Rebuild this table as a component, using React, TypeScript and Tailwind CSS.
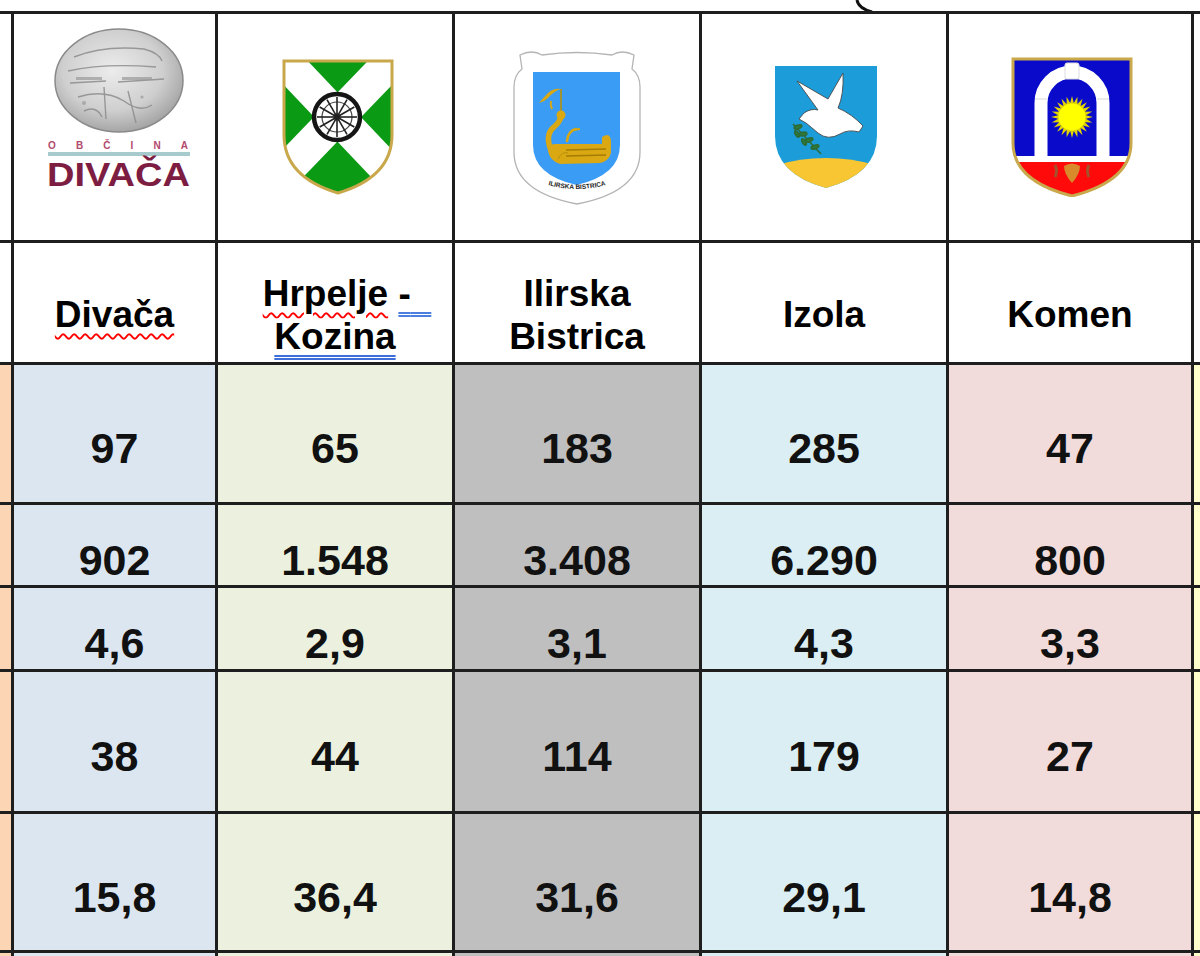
import React from "react";

const DivacaLogo = () => (
  <svg width="150" height="170" viewBox="0 0 150 170" className="mb-[30px] ml-[8px]">
    <defs>
      <radialGradient id="dg" cx="0.45" cy="0.4" r="0.65">
        <stop offset="0" stopColor="#ececec" />
        <stop offset="0.6" stopColor="#cfcfcf" />
        <stop offset="1" stopColor="#9c9c9c" />
      </radialGradient>
    </defs>
    <ellipse cx="75" cy="53.5" rx="64" ry="51.5" fill="url(#dg)" stroke="#8a8a8a" strokeWidth="1.5" />
    <g stroke="#8d8d8d" fill="none" strokeWidth="1.4" opacity="0.85">
      <path d="M30 30 Q60 18 100 22 Q115 26 118 34" />
      <path d="M24 44 Q60 36 112 40" />
      <path d="M26 56 L62 54 M74 55 L120 52" />
      <path d="M34 70 Q60 62 80 74 Q96 86 108 78" />
      <path d="M60 60 L62 92 M84 64 L92 96" />
      <path d="M40 84 Q52 78 58 90" />
    </g>
    <g fill="#9a9a9a" opacity="0.7">
      <rect x="32" y="50" width="26" height="3" />
      <rect x="78" y="50" width="30" height="3" />
      <circle cx="40" cy="76" r="2" />
      <circle cx="98" cy="70" r="1.6" />
    </g>
    <text x="4" y="122" fontSize="10" fill="#b24a6d" textLength="140" lengthAdjust="spacing" fontFamily="Liberation Sans, Arial, sans-serif" fontWeight="700">
      OBČINA
    </text>
    <rect x="4" y="125" width="142" height="4" fill="#a7cacd" />
    <text x="3" y="159" fontSize="33" fontWeight="700" fill="#7d1d42" textLength="143" lengthAdjust="spacingAndGlyphs" fontFamily="Liberation Sans, Arial, sans-serif">
      DIVAČA
    </text>
  </svg>
);

const HrpeljeShield = () => {
  const spokes = Array.from({ length: 12 }, (_, i) => {
    const a = (i * Math.PI * 2) / 12;
    return (
      <line key={i} x1={55 + 3 * Math.cos(a)} y1={58 + 3 * Math.sin(a)} x2={55 + 20 * Math.cos(a)} y2={58 + 20 * Math.sin(a)} stroke="#222" strokeWidth="1.6" />
    );
  });
  return (
    <svg width="112" height="136" viewBox="0 0 112 136" className="ml-[6px]">
      <defs>
        <clipPath id="hc">
          <path d="M2 2 H110 V76 Q110 118 56 134 Q2 118 2 76 Z" />
        </clipPath>
      </defs>
      <g clipPath="url(#hc)">
        <rect x="0" y="0" width="112" height="136" fill="#0a9a14" />
        <line x1="-10" y1="-11" x2="122" y2="128" stroke="#ffffff" strokeWidth="34" />
        <line x1="122" y1="-11" x2="-12" y2="128" stroke="#ffffff" strokeWidth="34" />
      </g>
      <path d="M2 2 H110 V76 Q110 118 56 134 Q2 118 2 76 Z" fill="none" stroke="#c9a84b" strokeWidth="3" />
      <circle cx="55" cy="58" r="23" fill="#fff" stroke="#151515" strokeWidth="4.5" />
      <circle cx="55" cy="58" r="15" fill="none" stroke="#444" strokeWidth="1.2" />
      {spokes}
      <circle cx="55" cy="58" r="3.4" fill="#222" />
    </svg>
  );
};

const IlirskaShield = () => (
  <svg width="134" height="160" viewBox="0 0 134 160">
    <path
      d="M10 8 Q22 2 32 8 Q67 3 102 8 Q112 2 124 8 L122 22 Q130 28 130 40 L130 105 Q130 145 67 157 Q4 145 4 105 L4 40 Q4 28 12 22 Z"
      fill="#fff"
      stroke="#b4b4b4"
      strokeWidth="1.3"
    />
    <path d="M23 25 H110 V98 Q110 128 66.5 138 Q23 128 23 98 Z" fill="#3a9cf5" />
    <path d="M51 42 L51 68" stroke="#b8900a" strokeWidth="1.6" />
    <path d="M51 42 Q44 44 38 51 Q34 55 29 56 Q34 50 38 46 Q44 41 51 42 Z" fill="#d9a812" />
    <path d="M41 54 Q40 58 42 62" stroke="#d9a812" strokeWidth="2" fill="none" />
    <path d="M42 106 Q34 88 44 80 Q51 74 51 68" stroke="#d9a812" strokeWidth="5.5" fill="none" strokeLinecap="round" />
    <circle cx="51" cy="68" r="4.5" fill="#d9a812" />
    <path d="M57 94 Q58 84 66 82" stroke="#d9a812" strokeWidth="2.6" fill="none" strokeLinecap="round" />
    <path d="M62 83 L70 82" stroke="#d9a812" strokeWidth="2" />
    <path d="M92 90 Q101 84 101 96 L101 106 Q99 114 90 116 L50 117 Q40 114 38 104 Q38 97 45 97 L92 97 Z" fill="#d9a812" />
    <path d="M56 103 L96 102 M56 109 L96 108" stroke="#a57d05" strokeWidth="1.4" />
    <path d="M48 112 Q52 104 58 106" stroke="#b8900a" strokeWidth="1" fill="none" />
    <defs>
      <path id="ibarc" d="M26 134 Q67 150 108 134" />
    </defs>
    <text fontSize="6.5" fontWeight="700" fill="#222" fontFamily="Liberation Sans, Arial, sans-serif">
      <textPath href="#ibarc" startOffset="50%" textAnchor="middle">
        ILIRSKA BISTRICA
      </textPath>
    </text>
  </svg>
);

const IzolaShield = () => (
  <svg width="106" height="126" viewBox="0 0 106 126" className="ml-[4px]">
    <defs>
      <clipPath id="ic">
        <path d="M2 2 H104 V72 Q104 110 53 124 Q2 110 2 72 Z" />
      </clipPath>
    </defs>
    <g clipPath="url(#ic)">
      <rect x="0" y="0" width="106" height="126" fill="#1c9dd9" />
      <path d="M0 102 Q53 86 106 102 V126 H0 Z" fill="#f8c632" />
    </g>
    <g stroke="#2c6a36" strokeWidth="1.6" fill="#2f7a3a">
      <path d="M20 60 L48 90" fill="none" />
      <ellipse cx="25" cy="63" rx="4" ry="1.8" transform="rotate(-20 25 63)" />
      <ellipse cx="30" cy="70" rx="4" ry="1.8" transform="rotate(-10 30 70)" />
      <ellipse cx="24" cy="70" rx="3.5" ry="1.6" transform="rotate(60 24 70)" />
      <ellipse cx="36" cy="76" rx="4" ry="1.8" transform="rotate(-20 36 76)" />
      <ellipse cx="31" cy="78" rx="3.5" ry="1.6" transform="rotate(60 31 78)" />
      <ellipse cx="42" cy="83" rx="4" ry="1.8" transform="rotate(-20 42 83)" />
    </g>
    <path
      d="M26 55 L31 49 Q38 44 45 46 L24 17 L55 35 L70 9 Q71 31 65 44 Q79 50 90 62 L86 68 Q75 65 67 70 Q55 77 45 69 Q38 63 33 59 Z"
      fill="#ffffff"
      stroke="#4a4a4a"
      strokeWidth="0.9"
      strokeLinejoin="round"
    />
  </svg>
);

const KomenShield = () => {
  const pts: string[] = [];
  for (let i = 0; i < 48; i++) {
    const a = (i * Math.PI * 2) / 48;
    const r = i % 2 === 0 ? 21 : 14;
    pts.push(`${61 + r * Math.cos(a)},${60 + r * Math.sin(a)}`);
  }
  return (
    <svg width="122" height="140" viewBox="0 0 122 140" className="ml-[4px]">
      <defs>
        <clipPath id="kc">
          <path d="M2 2 H120 V86 Q120 124 61 139 Q2 124 2 86 Z" />
        </clipPath>
      </defs>
      <g clipPath="url(#kc)">
        <rect x="0" y="0" width="122" height="140" fill="#0a0acb" />
        <rect x="0" y="99" width="122" height="6" fill="#ffffff" />
        <rect x="0" y="105" width="122" height="40" fill="#ff0a0a" />
      </g>
      <path d="M30 100 V46 A31 31 0 0 1 92 46 V100" stroke="#ffffff" strokeWidth="13" fill="none" />
      <rect x="54" y="6" width="14" height="16" rx="2" fill="#ffffff" stroke="#dcdcdc" strokeWidth="1" />
      <path d="M24 42 H36 M86 42 H98" stroke="#d8d8d8" strokeWidth="1.2" />
      <polygon points={pts.join(" ")} fill="#e0d400" />
      <circle cx="61" cy="60" r="13.5" fill="#ffff00" />
      <path d="M53 109 Q61 104 69 109 Q69 117 61 126 Q53 117 53 109 Z" fill="#d98a2a" />
      <path d="M44 108 Q47 114 44 120 M78 108 Q75 114 78 120" stroke="#a5522c" strokeWidth="3" fill="none" />
      <path d="M2 2 H120 V86 Q120 124 61 139 Q2 124 2 86 Z" fill="none" stroke="#c9a94c" strokeWidth="3" />
    </svg>
  );
};

const colBg = ["bg-[#fcd5b4]", "bg-[#dce6f1]", "bg-[#ebf1de]", "bg-[#bfbfbf]", "bg-[#daeef3]", "bg-[#f2dcdb]", "bg-[#ffffcc]"];

const rows: string[][] = [
  ["97", "65", "183", "285", "47"],
  ["902", "1.548", "3.408", "6.290", "800"],
  ["4,6", "2,9", "3,1", "4,3", "3,3"],
  ["38", "44", "114", "179", "27"],
  ["15,8", "36,4", "31,6", "29,1", "14,8"],
  ["", "", "", "", ""],
];

export default function App() {
  const logos = [<DivacaLogo key="d" />, <HrpeljeShield key="h" />, <IlirskaShield key="i" />, <IzolaShield key="z" />, <KomenShield key="k" />];
  const nameCls = "text-[37px] font-bold leading-[43px] text-black";
  const names = [
    <span key="n1" className={nameCls}>
      <span className="underline decoration-wavy decoration-[#f00] decoration-2 underline-offset-[6px]">Divača</span>
    </span>,
    <span key="n2" className={nameCls}>
      <span className="ml-[24px]">
        <span className="underline decoration-wavy decoration-[#f00] decoration-2 underline-offset-[6px]">Hrpelje</span>{" "}
        <span className="underline decoration-double decoration-[#4a7fe0] decoration-2 underline-offset-[6px]">-{"\u00a0\u00a0"}</span>
      </span>
      <br />
      <span className="underline decoration-double decoration-[#3d6fdb] decoration-2 underline-offset-[6px]">Kozina</span>
    </span>,
    <span key="n3" className={nameCls}>
      Ilirska
      <br />
      Bistrica
    </span>,
    <span key="n4" className={nameCls}>Izola</span>,
    <span key="n5" className={nameCls}>Komen</span>,
  ];

  return (
    <div className="h-[956px] w-[1200px] overflow-hidden bg-white font-['Liberation_Sans',Arial,sans-serif]">
      <div className="h-[11px] bg-white">
        <svg width="24" height="11" viewBox="0 0 24 11" className="ml-[852px]">
          <path d="M5 0 Q6 8 20 12" stroke="#111" strokeWidth="3" fill="none" />
        </svg>
      </div>
      <div className="grid grid-cols-[11px_201px_234px_244px_244px_242px_1fr] grid-rows-[226px_119px_137px_80px_81px_139px_136px_40px] gap-[3px] bg-[#1e1e1e] pt-[3px]">
        <div className="bg-white" />
        {logos.map((l, i) => (
          <div key={i} className="flex items-center justify-center bg-white">
            {l}
          </div>
        ))}
        <div className="bg-white" />

        <div className="bg-white" />
        {names.map((n, i) => (
          <div key={i} className="flex items-center justify-center bg-white pt-[24px] text-center">
            {n}
          </div>
        ))}
        <div className="bg-white" />

        {rows.map((r, ri) => (
          <React.Fragment key={ri}>
            <div className={colBg[0]} />
            {r.map((v, ci) => (
              <div key={ci} className={`flex items-center justify-center pt-[30px] text-[43px] font-bold text-[#111] ${colBg[ci + 1]}`}>
                {v}
              </div>
            ))}
            <div className={colBg[6]} />
          </React.Fragment>
        ))}
      </div>
    </div>
  );
}
